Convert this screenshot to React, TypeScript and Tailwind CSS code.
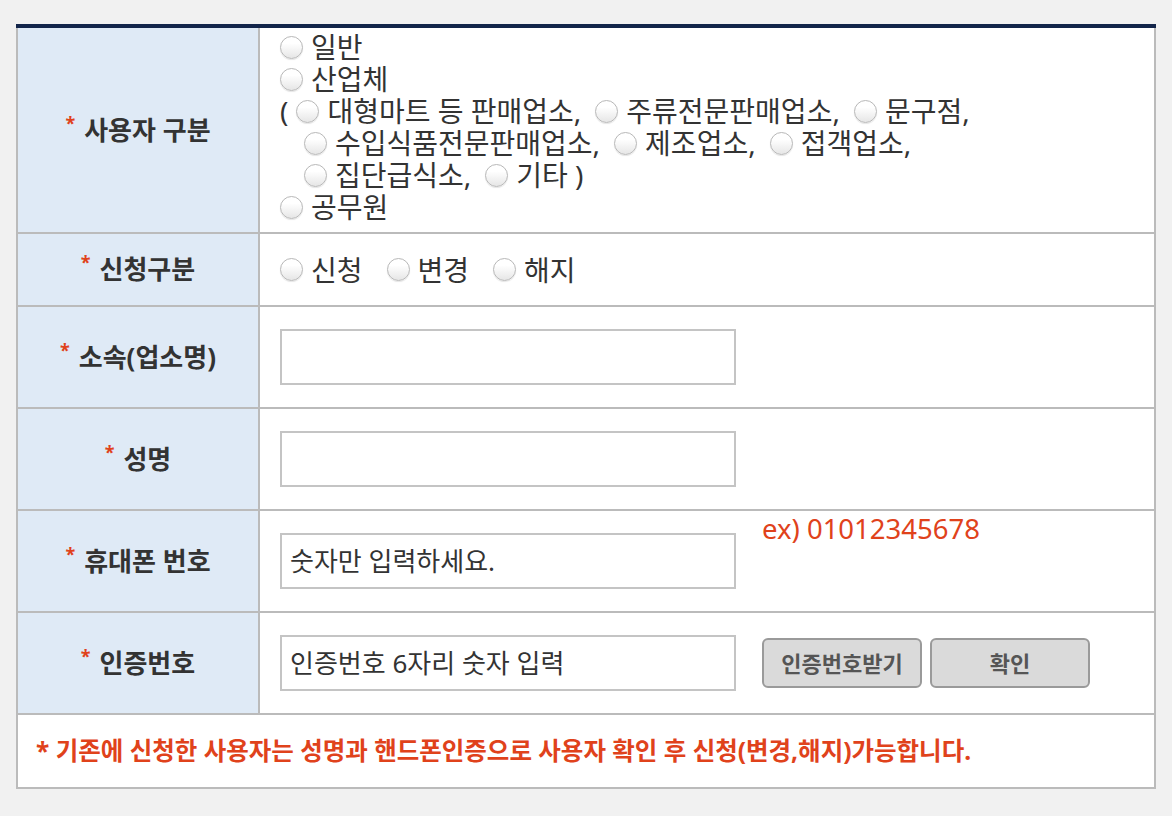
import { ReactNode } from 'react';

const Radio = ({ label }: { label: string }) => (
  <span className="inline-flex items-center gap-[8px]">
    <span className="inline-block shrink-0 w-[23px] h-[23px] rounded-full border border-[#b8b8b8] bg-linear-to-b from-white from-30% to-[#e6e6e6] shadow-[0_1px_1px_rgba(0,0,0,0.1)]" />
    <span>{label}</span>
  </span>
);

const Label = ({ children }: { children: ReactNode }) => (
  <div className="w-[242px] shrink-0 bg-[#dfeaf6] border-r-2 border-[#bbbbbb] flex items-center justify-center">
    <span className="text-[18px] font-bold text-[#e0421b] relative -top-[7px] mr-[9px]">*</span>
    <span className="text-[26px] font-bold text-[#333]">{children}</span>
  </div>
);

const Field = ({ placeholder = '' }: { placeholder?: string }) => (
  <input
    type="text"
    placeholder={placeholder}
    className="w-[456px] h-[56px] shrink-0 border-2 border-[#c4c4c4] px-2 text-[26px] text-[#333] placeholder:text-[#333] outline-none bg-white"
  />
);

const Row = ({ label, height, children }: { label: string; height: string; children: ReactNode }) => (
  <div className={`flex border-b-2 border-[#bbbbbb] ${height}`}>
    <Label>{label}</Label>
    <div className="flex-1 flex items-center pl-5">{children}</div>
  </div>
);

export default function App() {
  return (
    <div className="min-h-screen bg-[#f1f1f1] pt-6 px-4 font-['Noto_Sans','Noto_Sans_CJK_KR',sans-serif] text-[#333]">
      <div className="border-t-4 border-[#13254a]">
        <div className="border-x-2 border-b-2 border-[#bbbbbb] bg-white">
          {/* 사용자 구분 */}
          <div className="flex border-b-2 border-[#bbbbbb] h-[206px]">
            <Label>사용자 구분</Label>
            <div className="flex-1 pl-[20px] pt-[3px] text-[28px] leading-[32px]">
              <div className="flex"><Radio label="일반" /></div>
              <div className="flex"><Radio label="산업체" /></div>
              <div className="flex items-center gap-x-[14px]">
                <span className="-mr-[6px]">(</span>
                <Radio label="대형마트 등 판매업소," />
                <Radio label="주류전문판매업소," />
                <Radio label="문구점," />
              </div>
              <div className="flex items-center gap-x-[14px] pl-[24px]">
                <Radio label="수입식품전문판매업소," />
                <Radio label="제조업소," />
                <Radio label="접객업소," />
              </div>
              <div className="flex items-center gap-x-[14px] pl-[24px]">
                <Radio label="집단급식소," />
                <Radio label="기타 )" />
              </div>
              <div className="flex"><Radio label="공무원" /></div>
            </div>
          </div>

          <Row label="신청구분" height="h-[73px]">
            <div className="flex items-center gap-[24px] text-[28px]">
              <Radio label="신청" />
              <Radio label="변경" />
              <Radio label="해지" />
            </div>
          </Row>

          <Row label="소속(업소명)" height="h-[102px]">
            <Field />
          </Row>

          <Row label="성명" height="h-[102px]">
            <Field />
          </Row>

          <Row label="휴대폰 번호" height="h-[102px]">
            <Field placeholder="숫자만 입력하세요." />
            <span className="self-start -mt-[2px] ml-[26px] text-[27.5px] leading-[40px] text-[#e0421b]">ex) 01012345678</span>
          </Row>

          <Row label="인증번호" height="h-[102px]">
            <Field placeholder="인증번호 6자리 숫자 입력" />
            <div className="flex gap-2 ml-[26px]">
              <button className="w-[160px] h-[50px] rounded-md border-2 border-[#9a9a9a] bg-[#dadada] text-[22px] font-bold text-[#555]">
                인증번호받기
              </button>
              <button className="w-[160px] h-[50px] rounded-md border-2 border-[#9a9a9a] bg-[#dadada] text-[22px] font-bold text-[#555]">
                확인
              </button>
            </div>
          </Row>

          <div className="h-[72px] flex items-center pl-[18px]">
            <p className="text-[24.5px] font-bold text-[#e0421b]">
              * 기존에 신청한 사용자는 성명과 핸드폰인증으로 사용자 확인 후 신청(변경,해지)가능합니다.
            </p>
          </div>
        </div>
      </div>
    </div>
  );
}
